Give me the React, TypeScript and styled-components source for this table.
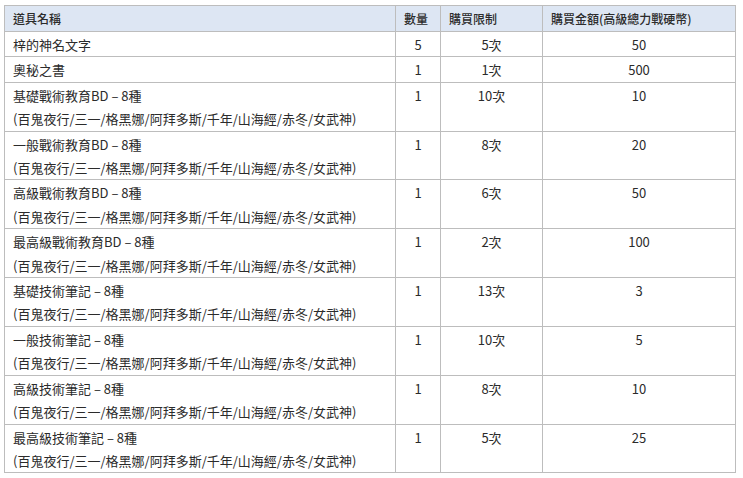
import React from 'react';
import styled, { createGlobalStyle } from 'styled-components';

type Item = {
  name: string;
  note?: string;
  qty: number;
  limit: string;
  price: number;
};

const NOTE = '(百鬼夜行/三一/格黑娜/阿拜多斯/千年/山海經/赤冬/女武神)';

const ITEMS: Item[] = [
  { name: '梓的神名文字', qty: 5, limit: '5次', price: 50 },
  { name: '奧秘之書', qty: 1, limit: '1次', price: 500 },
  { name: '基礎戰術教育BD – 8種', note: NOTE, qty: 1, limit: '10次', price: 10 },
  { name: '一般戰術教育BD – 8種', note: NOTE, qty: 1, limit: '8次', price: 20 },
  { name: '高級戰術教育BD – 8種', note: NOTE, qty: 1, limit: '6次', price: 50 },
  { name: '最高級戰術教育BD – 8種', note: NOTE, qty: 1, limit: '2次', price: 100 },
  { name: '基礎技術筆記 – 8種', note: NOTE, qty: 1, limit: '13次', price: 3 },
  { name: '一般技術筆記 – 8種', note: NOTE, qty: 1, limit: '10次', price: 5 },
  { name: '高級技術筆記 – 8種', note: NOTE, qty: 1, limit: '8次', price: 10 },
  { name: '最高級技術筆記 – 8種', note: NOTE, qty: 1, limit: '5次', price: 25 },
];

const COLUMNS = [
  { label: '道具名稱', width: 391 },
  { label: '數量', width: 45 },
  { label: '購買限制', width: 102 },
  { label: '購買金額(高級總力戰硬幣)', width: 193 },
];

const GlobalStyle = createGlobalStyle`
  body {
    margin: 0;
    background: #ffffff;
    font-family: "Noto Sans CJK TC", "Noto Sans", sans-serif;
  }
`;

const Page = styled.div`
  padding: 5px 0 0 4px;
`;

const Table = styled.table`
  width: 732px;
  border-collapse: collapse;
  table-layout: fixed;
  color: #2b2b2b;
  font-size: 13px;
`;

const Col = styled.col<{ $width: number }>`
  width: ${(props) => props.$width}px;
`;

const HeadCell = styled.th`
  height: 25px;
  padding: 0 8px;
  text-align: left;
  font-weight: 500;
  font-size: 12px;
  line-height: 22px;
  background: #dde6f3;
  border: 1px solid #bdbdbd;
  white-space: nowrap;
`;

const Cell = styled.td<{ $center?: boolean }>`
  padding: 1px 8px 0;
  vertical-align: top;
  text-align: ${(props) => (props.$center ? 'center' : 'left')};
  line-height: 23.4px;
  border: 1px solid #bdbdbd;
  white-space: nowrap;
`;

const Line = styled.div`
  display: block;
`;

const App: React.FC = () => (
  <Page>
    <GlobalStyle />
    <Table>
      <colgroup>
        {COLUMNS.map((col) => (
          <Col key={col.label} $width={col.width} />
        ))}
      </colgroup>
      <thead>
        <tr>
          {COLUMNS.map((col) => (
            <HeadCell key={col.label}>{col.label}</HeadCell>
          ))}
        </tr>
      </thead>
      <tbody>
        {ITEMS.map((item) => (
          <tr key={item.name}>
            <Cell>
              <Line>{item.name}</Line>
              {item.note && <Line>{item.note}</Line>}
            </Cell>
            <Cell $center>{item.qty}</Cell>
            <Cell $center>{item.limit}</Cell>
            <Cell $center>{item.price}</Cell>
          </tr>
        ))}
      </tbody>
    </Table>
  </Page>
);

export default App;
